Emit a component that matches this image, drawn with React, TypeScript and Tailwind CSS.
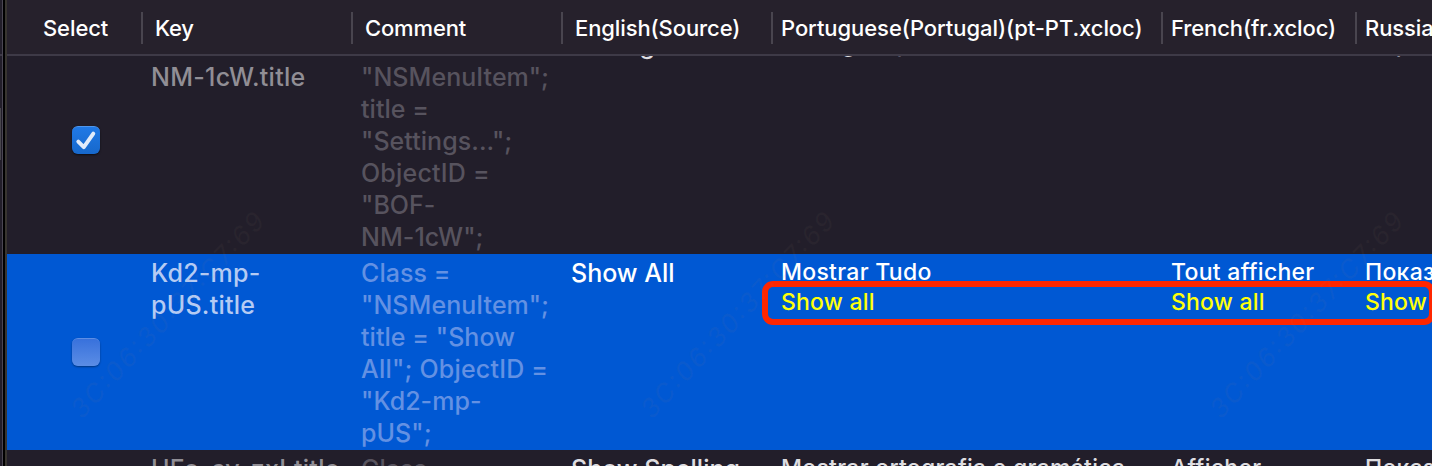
import React from "react";

type Row = {
  key: string[];
  comment: string[];
  english: string;
  translations: string[][];
  checked: boolean;
  selected?: boolean;
};

const columns = [
  { title: "Key", cls: "w-[210px] pl-3 tracking-[-0.3px]" },
  { title: "Comment", cls: "w-[210px] pl-3 tracking-[-0.15px]" },
  { title: "English(Source)", cls: "w-[210px] pl-3 tracking-[-0.1px]" },
  { title: "Portuguese(Portugal)(pt-PT.xcloc)", cls: "w-[390px] pl-2 tracking-[-0.07px]" },
  { title: "French(fr.xcloc)", cls: "w-[194px] pl-2 tracking-[-0.1px]" },
  { title: "Russian(ru.xcloc)", cls: "w-[210px] pl-2 tracking-[-0.1px]" },
];

const translationWidths = ["w-[390px]", "w-[194px]", "w-[210px]"];

const rows: Row[] = [
  {
    key: ["BOF-", "NM-1cW.title"],
    comment: ["Class =", '"NSMenuItem";', "title =", '"Settings...";', "ObjectID =", '"BOF-', 'NM-1cW";'],
    english: "Settings…",
    translations: [["Configurações…"], ["Préférences…"], ["Параметры…"]],
    checked: true,
  },
  {
    key: ["Kd2-mp-", "pUS.title"],
    comment: ["Class =", '"NSMenuItem";', 'title = "Show', 'All"; ObjectID =', '"Kd2-mp-', 'pUS";'],
    english: "Show All",
    translations: [["Mostrar Tudo", "Show all"], ["Tout afficher", "Show all"], ["Показать все", "Show all"]],
    checked: false,
    selected: true,
  },
  {
    key: ["HFo-cy-zxI.title"],
    comment: ["Class ="],
    english: "Show Spelling",
    translations: [["Mostrar ortografia e gramática"], ["Afficher"], ["Показать"]],
    checked: false,
  },
];

function Checkbox({ checked }: { checked: boolean }) {
  return checked ? (
    <span className="flex size-7 items-center justify-center rounded-[6px] border-t border-[#4f96ec] bg-linear-to-b from-[#2079e6] to-[#1768cb] shadow-[0_1px_2px_rgba(0,0,0,0.6)]">
      <svg viewBox="0 0 28 28" className="size-7 shrink-0" fill="none">
        <path d="M6.3 14.6 L11.8 20.2 L21.3 6.6" stroke="#e1ebfa" strokeWidth="3.9" strokeLinecap="round" strokeLinejoin="round" />
      </svg>
    </span>
  ) : (
    <span className="block size-7 rounded-[6px] border-t border-[#5d8ee5] bg-linear-to-b from-[#3871dc] to-[#5b8de5] shadow-[0_1px_2px_rgba(0,0,0,0.4)]" />
  );
}

function TableRow({ row }: { row: Row }) {
  const sel = row.selected;
  return (
    <div className={`flex shrink-0 text-[25px] leading-8 font-[460] ${sel ? "h-[196px] bg-[#0058d3]" : row.checked ? "h-[228px]" : "h-[196px]"}`}>
      <div className="flex w-[135px] shrink-0 items-center pl-[65px]">
        <Checkbox checked={row.checked} />
      </div>
      <div className={`w-[210px] shrink-0 pt-[3px] pl-[9px] tracking-[0.25px] ${sel ? "text-[#b5cbf3]" : "text-[#918e95]"}`}>
        {row.key.map((t) => <div key={t}>{t}</div>)}
      </div>
      <div className={`w-[210px] shrink-0 pt-[3px] pl-[9px] tracking-[0.05px] ${sel ? "text-[#6391e3]" : "text-[#57535e]"}`}>
        {row.comment.map((t) => <div key={t} className={t.startsWith("All") || t.startsWith("Obj") ? "tracking-[0.2px]" : ""}>{t}</div>)}
      </div>
      <div className={`w-[210px] shrink-0 pt-[3px] pl-[9px] ${sel ? "text-white" : "text-[#dedde0]"}`}>{row.english}</div>
      {row.translations.map((lines, i) => (
        <div key={i} className={`${translationWidths[i]} shrink-0 pt-[3px] pl-[9px] text-[23px] leading-[30px] tracking-[0.28px] ${sel ? "text-white" : "text-[#dedde0]"}`}>
          {lines.map((t, n) => <div key={n} className={n === 1 ? "tracking-[0.2px] text-[#ffff0a]" : ""}>{t}</div>)}
        </div>
      ))}
    </div>
  );
}

export default function App() {
  return (
    <div className="relative flex h-[466px] w-[1432px] overflow-hidden bg-[#221e2a] font-['Inter',sans-serif] whitespace-nowrap">
      <div className="flex w-[7px] shrink-0">
        <div className="flex w-[2px] flex-col">
          <div className="h-[54px]" />
          <div className="h-[2px] bg-[#3e3a47]" />
          <div className="h-[52px]" />
          <div className="h-[52px] w-px bg-[#48464c]" />
        </div>
        <div className="w-px bg-[#4a4653]" />
        <div className="w-[2px] bg-black" />
        <div className="w-[2px] bg-[#383530]" />
      </div>
      <div className="flex w-[1425px] shrink-0 flex-col overflow-hidden">
        <div className="z-10 flex h-14 shrink-0 items-center border-b-2 border-[#3e3a47] bg-[#26212c] pt-[2px] text-[22px] font-medium text-white">
          <div className="w-[134px] shrink-0 pl-9 tracking-[-0.1px]">Select</div>
          {columns.map((c) => (
            <div key={c.title} className={`-mt-px flex h-8 shrink-0 items-center border-l-2 border-[#49454f] pt-px ${c.cls}`}>{c.title}</div>
          ))}
        </div>
        <div className="-mt-[30px] flex flex-col">
          {rows.map((r) => <TableRow key={r.english} row={r} />)}
        </div>
      </div>
      <div className="absolute top-[281px] left-[762px] h-[44px] w-[673px] rounded-[11px] border-[6px] border-[#ff2600]" />
      <svg className="pointer-events-none absolute inset-0" width="1432" height="466">
        {[82, 652, 1221].map((x) => (
          <text key={x} x={x} y={420} transform={`rotate(-47 ${x} 420)`} fontSize="26" fontStyle="italic" fontWeight="500" textLength="270" fill="#a08478" fillOpacity="0.06">
            3C:06:30:37:C7:69
          </text>
        ))}
      </svg>
    </div>
  );
}
